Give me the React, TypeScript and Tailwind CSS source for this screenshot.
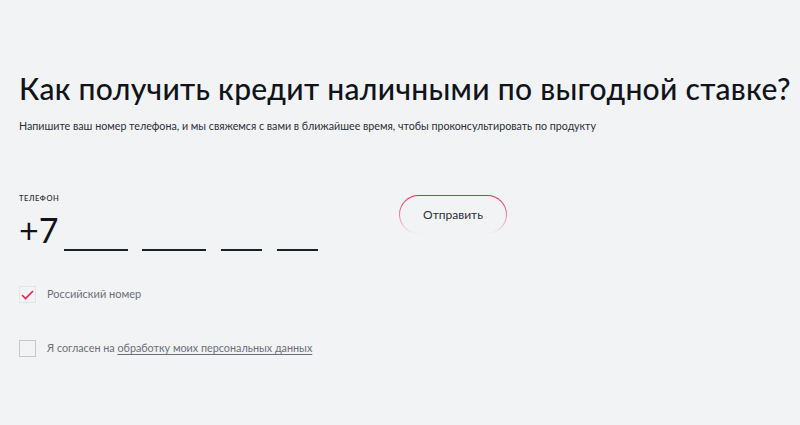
import React from "react";

export default function App() {
  return (
    <div className="w-[800px] h-[425px] bg-[#f2f3f5] overflow-hidden font-['Lato',sans-serif] text-[#10131a]">
      <div className="pl-[19px] pt-[68px]">
        <h1 className="whitespace-nowrap text-[30px] leading-[40px] font-medium tracking-[0.3px]">
          Как получить кредит наличными по выгодной ставке?
        </h1>
        <p className="mt-[11px] whitespace-nowrap text-[10.7px] leading-[14px] text-[#2a2f38]">
          Напишите ваш номер телефона, и мы свяжемся с вами в ближайшее время, чтобы проконсультировать по продукту
        </p>
        <div className="mt-[62px] flex items-start">
          <div className="w-[380px]">
            <div className="text-[7.5px] leading-[8px] font-semibold tracking-[0.6px] text-[#333]">ТЕЛЕФОН</div>
            <div className="mt-[10px] flex items-end">
              <span className="text-[34px] leading-[34px]">+7</span>
              <div className="ml-[6px] mb-[-4px] flex">
                <div className="w-[64px] h-[2px] bg-[#1c2028]" />
                <div className="ml-[14px] w-[64px] h-[2px] bg-[#1c2028]" />
                <div className="ml-[15px] w-[41px] h-[2px] bg-[#1c2028]" />
                <div className="ml-[15px] w-[41px] h-[2px] bg-[#1c2028]" />
              </div>
            </div>
          </div>
          <div className="mt-[0px] rounded-full p-[1px] bg-gradient-to-b from-[#e8234d] via-[#f07a93] to-transparent">
            <button className="w-[106px] h-[37px] rounded-full bg-[#f2f3f5] text-[12px] text-[#2a2f38]">
              Отправить
            </button>
          </div>
        </div>
        <div className="mt-[39px] flex items-center gap-[11px]">
          <div className="w-[17px] h-[17px] border border-[#e4e5e8] flex items-center justify-center">
            <svg width="13" height="10" viewBox="0 0 13 10" fill="none">
              <path d="M1 5 L4.5 8.5 L12 1" stroke="#e8234d" strokeWidth="1.6" />
            </svg>
          </div>
          <span className="text-[11px] text-[#6b6f78]">Российский номер</span>
        </div>
        <div className="mt-[37px] flex items-center gap-[11px]">
          <div className="w-[17px] h-[17px] border border-[#c5c7cc]" />
          <span className="text-[10.8px] text-[#6b6f78]">
            Я согласен на <span className="underline underline-offset-2">обработку моих персональных данных</span>
          </span>
        </div>
      </div>
    </div>
  );
}
